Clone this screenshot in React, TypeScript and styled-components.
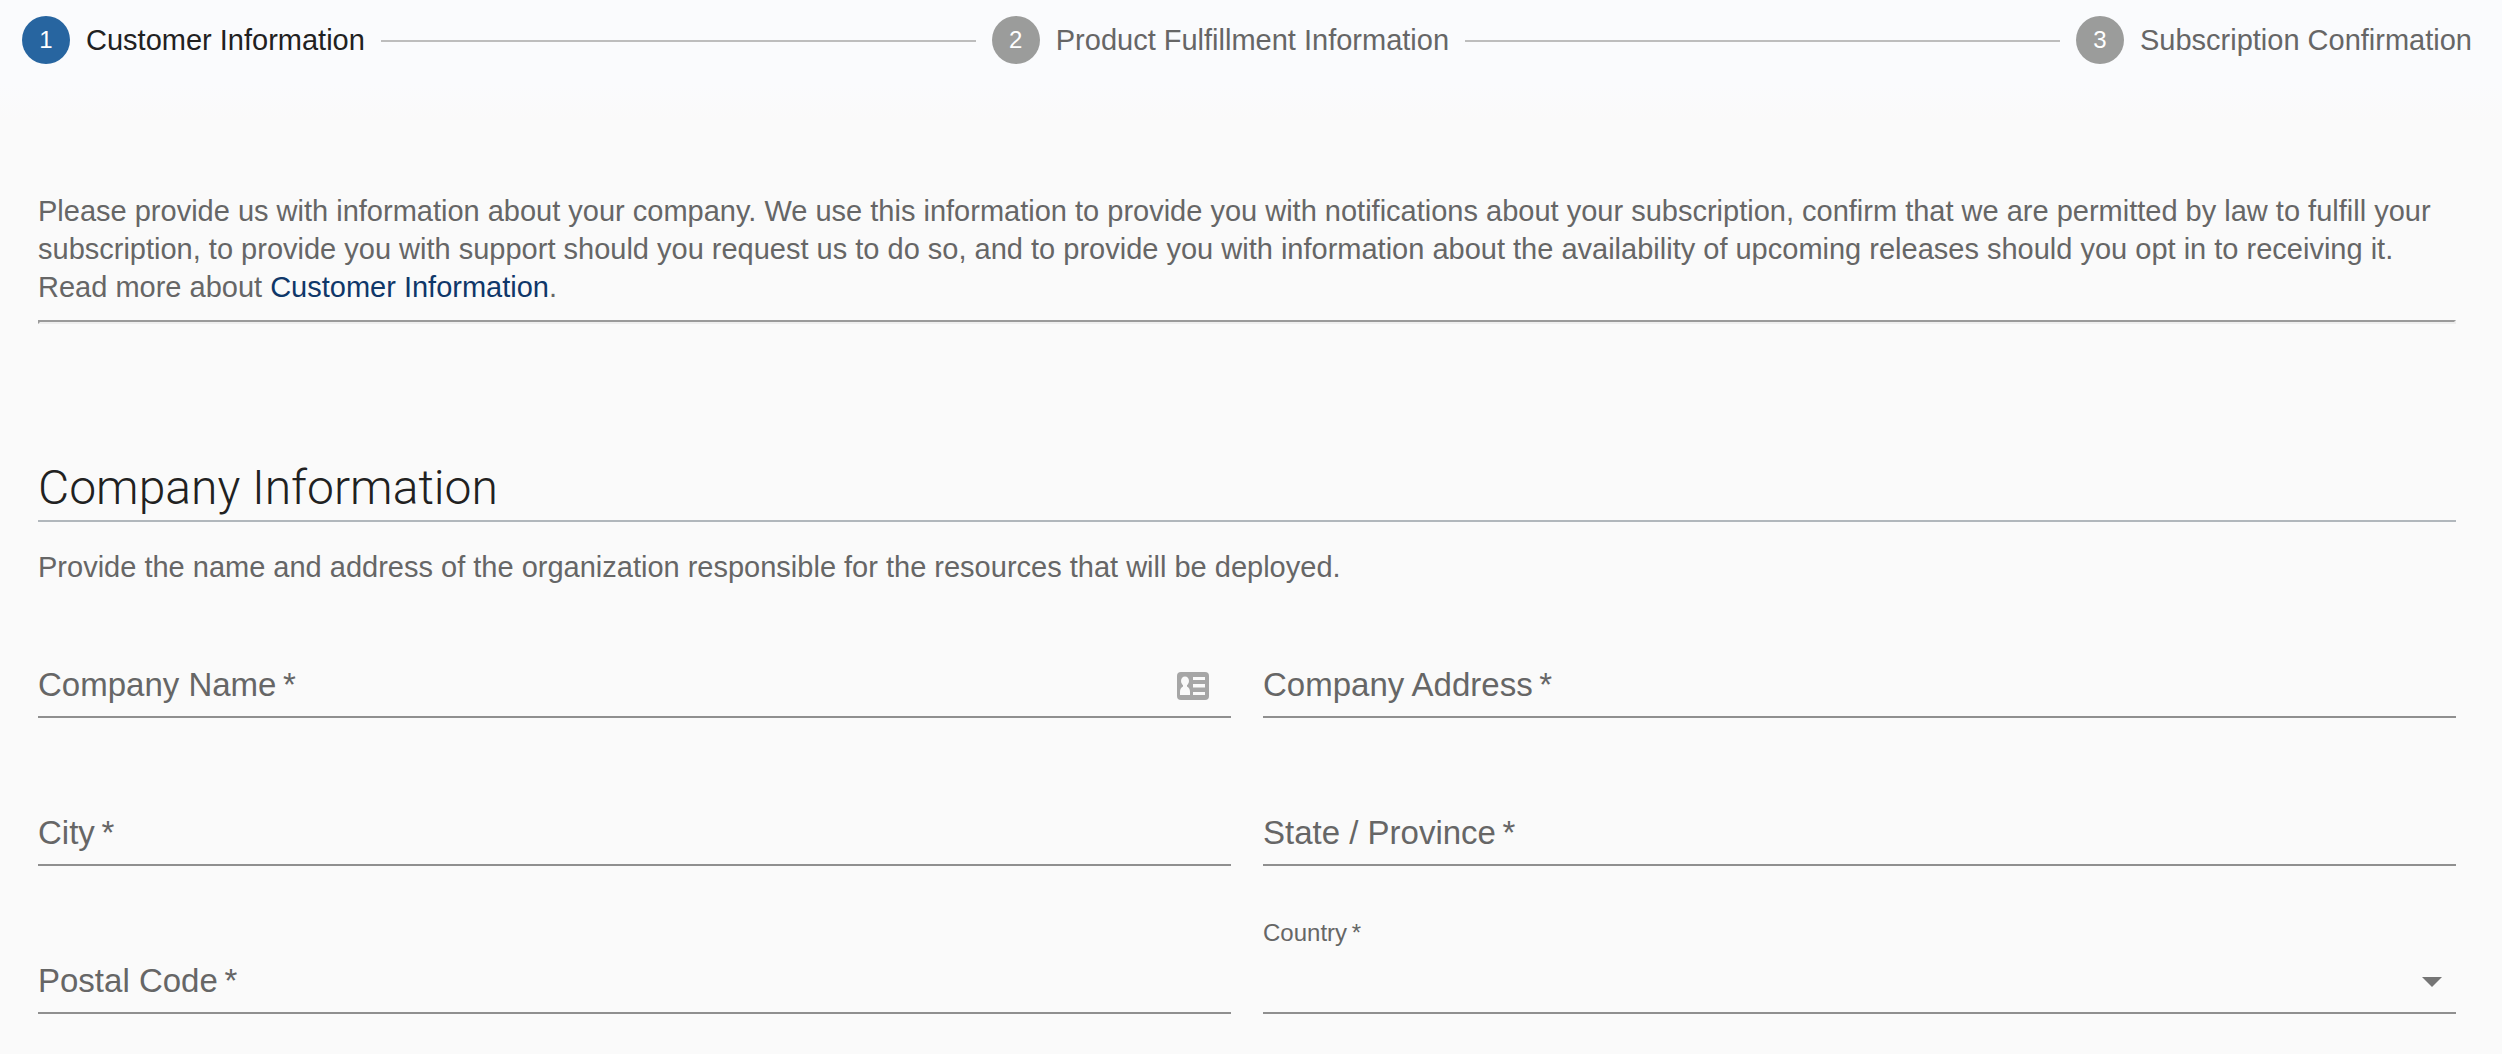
import React from 'react';
import styled, { createGlobalStyle } from 'styled-components';

const GlobalStyle = createGlobalStyle`
  *, *::before, *::after { box-sizing: border-box; }
  body {
    margin: 0;
    background: #fafafa;
    color: #666666;
    font-family: "Liberation Sans", Arial, Helvetica, sans-serif;
    font-size: 29px;
    line-height: 38px;
  }
`;

const Stepper = styled.ol`
  display: flex;
  align-items: flex-start;
  gap: 16px;
  margin: 0;
  padding: 16px 30px 56px 22px;
  list-style: none;
  background: linear-gradient(#fafbfd 0%, #fafbfd 70%, #fafafa 100%);
`;

const Step = styled.li<{ $active?: boolean }>`
  display: flex;
  align-items: center;
  gap: 16px;
  flex: none;
  height: 48px;
  color: ${(p) => (p.$active ? '#212121' : '#666666')};
`;

const StepNumber = styled.span<{ $active?: boolean }>`
  display: grid;
  place-items: center;
  width: 48px;
  height: 48px;
  border-radius: 50%;
  background: ${(p) => (p.$active ? '#2765a0' : '#9b9c9b')};
  color: #ffffff;
  font-size: 24px;
`;

const Connector = styled.li`
  flex: 1;
  height: 2px;
  margin-top: 24px;
  background: #bdbdbd;
`;

const Main = styled.main`
  padding: 72px 46px 40px 38px;
`;

const Intro = styled.p`
  margin: 0 0 14px;
`;

const Link = styled.a`
  color: #0f3769;
  text-decoration: none;
`;

const Divider = styled.hr`
  margin: 0 0 136px;
  border: 2px solid;
  border-color: #9a9a9a #eeeeee #eeeeee #9a9a9a;
`;

const Heading = styled.h1`
  margin: 0 0 26px;
  padding-bottom: 4px;
  border-bottom: 2px solid #b1b7bc;
  color: #212121;
  font-family: Roboto, "Liberation Sans", sans-serif;
  font-size: 48px;
  font-weight: 300;
  line-height: 56px;
`;

const Description = styled.p`
  margin: 0 0 16px;
`;

const Form = styled.form`
  display: grid;
  grid-template-columns: repeat(2, minmax(0, 1fr));
  gap: 32px;
`;

const Field = styled.div`
  display: grid;
  grid-template-columns: minmax(0, 1fr) auto;
  grid-template-rows: 32px 64px;
  align-items: center;
  padding-top: 20px;
`;

const Label = styled.label<{ $small?: boolean }>`
  grid-column: 1;
  grid-row: ${(p) => (p.$small ? 1 : 2)};
  z-index: 1;
  padding-bottom: 2px;
  font-size: ${(p) => (p.$small ? '24px' : '33px')};
  line-height: ${(p) => (p.$small ? '30px' : '40px')};
  pointer-events: none;
`;

const Input = styled.input`
  grid-column: 1 / -1;
  grid-row: 2;
  width: 100%;
  height: 64px;
  padding: 0;
  border: 0;
  border-bottom: 2px solid #8f8f8f;
  border-radius: 0;
  outline: none;
  background: transparent;
  color: #212121;
  font: inherit;
  font-size: 33px;

  &:focus {
    border-color: #2765a0;
  }

  &:not(:placeholder-shown) ~ ${Label}, &:focus ~ ${Label} {
    grid-row: 1;
    font-size: 24px;
    line-height: 30px;
  }
`;

const Select = styled(Input).attrs({ as: 'select' })`
  appearance: none;
`;

const Adornment = styled.span<{ $inset: number }>`
  display: flex;
  grid-column: 2;
  grid-row: 2;
  z-index: 1;
  margin-right: ${(p) => p.$inset}px;
  pointer-events: none;
`;

const ContactCardIcon = () => (
  <svg width="32" height="28" viewBox="0 0 32 28" aria-hidden="true">
    <rect width="32" height="28" rx="4" fill="#a6a6a6" />
    <g fill="#fafafa">
      <ellipse cx="8" cy="9" rx="4" ry="4.5" />
      <path d="M6 12h4v2.500c2.200 1 3 3 3 5.500v3H3v-3c0-2.500.8-4.500 3-5.500z" />
      <path d="M16 5h12v3H16zM16 12h12v3.500H16zM16 20h12v3H16z" />
    </g>
  </svg>
);

const CaretIcon = () => (
  <svg width="20" height="10" viewBox="0 0 20 10" aria-hidden="true">
    <path d="M0 0h20L10 10z" fill="#757575" />
  </svg>
);

const steps = [
  'Customer Information',
  'Product Fulfillment Information',
  'Subscription Confirmation',
];

type TextFieldProps = { id: string; label: string; icon?: React.ReactNode };

const TextField = ({ id, label, icon }: TextFieldProps) => (
  <Field>
    <Input id={id} name={id} type="text" placeholder=" " required />
    <Label htmlFor={id}>{label}&thinsp;*</Label>
    {icon && <Adornment $inset={22}>{icon}</Adornment>}
  </Field>
);

export default function App() {
  return (
    <>
      <GlobalStyle />
      <Stepper>
        {steps.map((title, i) => (
          <React.Fragment key={title}>
            {i > 0 && <Connector aria-hidden="true" />}
            <Step $active={i === 0} aria-current={i === 0 ? 'step' : undefined}>
              <StepNumber $active={i === 0}>{i + 1}</StepNumber>
              <span>{title}</span>
            </Step>
          </React.Fragment>
        ))}
      </Stepper>
      <Main>
        <Intro>
          Please provide us with information about your company. We use this information to
          provide you with notifications about your subscription, confirm that we are permitted
          by law to fulfill your subscription, to provide you with support should you request us
          to do so, and to provide you with information about the availability of upcoming
          releases should you opt in to receiving it. Read more about{' '}
          <Link href="#customer-information">Customer Information</Link>.
        </Intro>
        <Divider />
        <Heading>Company Information</Heading>
        <Description>
          Provide the name and address of the organization responsible for the resources that
          will be deployed.
        </Description>
        <Form>
          <TextField id="company-name" label="Company Name" icon={<ContactCardIcon />} />
          <TextField id="company-address" label="Company Address" />
          <TextField id="city" label="City" />
          <TextField id="state" label="State / Province" />
          <TextField id="postal-code" label="Postal Code" />
          <Field>
            <Select id="country" name="country" required defaultValue="">
              <option value="" aria-label="None" />
              <option value="CA">Canada</option>
              <option value="US">United States</option>
            </Select>
            <Label htmlFor="country" $small>
              Country&thinsp;*
            </Label>
            <Adornment $inset={14}>
              <CaretIcon />
            </Adornment>
          </Field>
        </Form>
      </Main>
    </>
  );
}
